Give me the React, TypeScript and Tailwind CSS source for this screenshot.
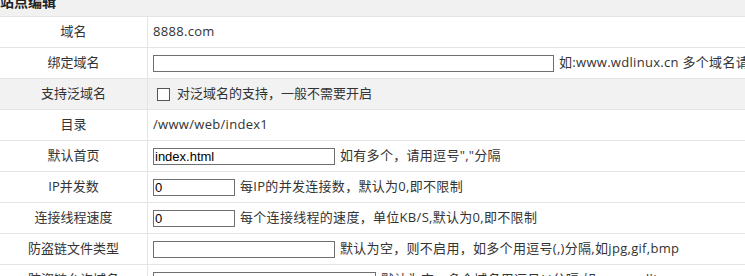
import React from "react"

type Row = {
  label: string
  gray?: boolean
  kind: "text" | "input" | "check"
  value?: string
  inputWidth?: number
  hint?: string
}

const rows: Row[] = [
  { label: "域名", kind: "text", value: "8888.com" },
  { label: "绑定域名", kind: "input", value: "", inputWidth: 401, hint: "如:www.wdlinux.cn 多个域名请用空格分隔" },
  { label: "支持泛域名", kind: "check", gray: true, hint: "对泛域名的支持，一般不需要开启" },
  { label: "目录", kind: "text", value: "/www/web/index1" },
  { label: "默认首页", kind: "input", value: "index.html", inputWidth: 182, hint: "如有多个，请用逗号\",\"分隔" },
  { label: "IP并发数", kind: "input", value: "0", inputWidth: 82, hint: "每IP的并发连接数，默认为0,即不限制" },
  { label: "连接线程速度", kind: "input", value: "0", inputWidth: 82, hint: "每个连接线程的速度，单位KB/S,默认为0,即不限制" },
  { label: "防盗链文件类型", kind: "input", value: "", inputWidth: 182, hint: "默认为空，则不启用，如多个用逗号(,)分隔,如jpg,gif,bmp" },
  { label: "防盗链允许域名", kind: "input", value: "", inputWidth: 223, hint: "默认为空，多个域名用逗号(,)分隔,如www.wdlinux.cn" },
]

const font = { fontFamily: '"Open Sans", "Noto Sans CJK SC", sans-serif' }

function Field({ row }: { row: Row }) {
  if (row.kind === "text") {
    return <span className="pl-[5px] text-[13px] text-[#333] tracking-[0.3px]">{row.value}</span>
  }
  if (row.kind === "check") {
    return (
      <div className="flex items-center pl-[9px]">
        <span className="w-[13px] h-[13px] border border-[#555] bg-white shrink-0" />
        <span className="ml-[7px] text-[13px] text-[#333]">{row.hint}</span>
      </div>
    )
  }
  return (
    <div className="flex items-center pl-[5px]">
      <input
        readOnly
        value={row.value}
        style={{ width: row.inputWidth, fontFamily: '"Liberation Sans", Arial, sans-serif' }}
        className="h-[17px] border border-[#6f6f6f] bg-white px-[1px] text-[13px] leading-[15px] text-black outline-none shrink-0"
      />
      <span className="ml-[5px] text-[13px] text-[#333] tracking-[0.3px]">{row.hint}</span>
    </div>
  )
}

export default function App() {
  return (
    <div className="w-[745px] h-[276px] overflow-hidden bg-white whitespace-nowrap" style={font}>
      <div className="h-[17px] bg-[#f1f1f1] border-b border-[#e3e4e9] overflow-hidden">
        <span className="block -mt-[8px] text-[14px] font-bold text-[#222] leading-[20px]">站点编辑</span>
      </div>
      {rows.map((row) => (
        <div
          key={row.label}
          className={`flex h-[31px] border-b border-[#e3e4e9] ${row.gray ? "bg-[#f2f2f2]" : "bg-white"}`}
        >
          <div className="w-[148px] shrink-0 border-r border-[#e3e4e9] flex items-center justify-center text-[13px] text-[#333]">
            {row.label}
          </div>
          <div className="flex-1 flex items-center min-w-0">
            <Field row={row} />
          </div>
        </div>
      ))}
    </div>
  )
}
